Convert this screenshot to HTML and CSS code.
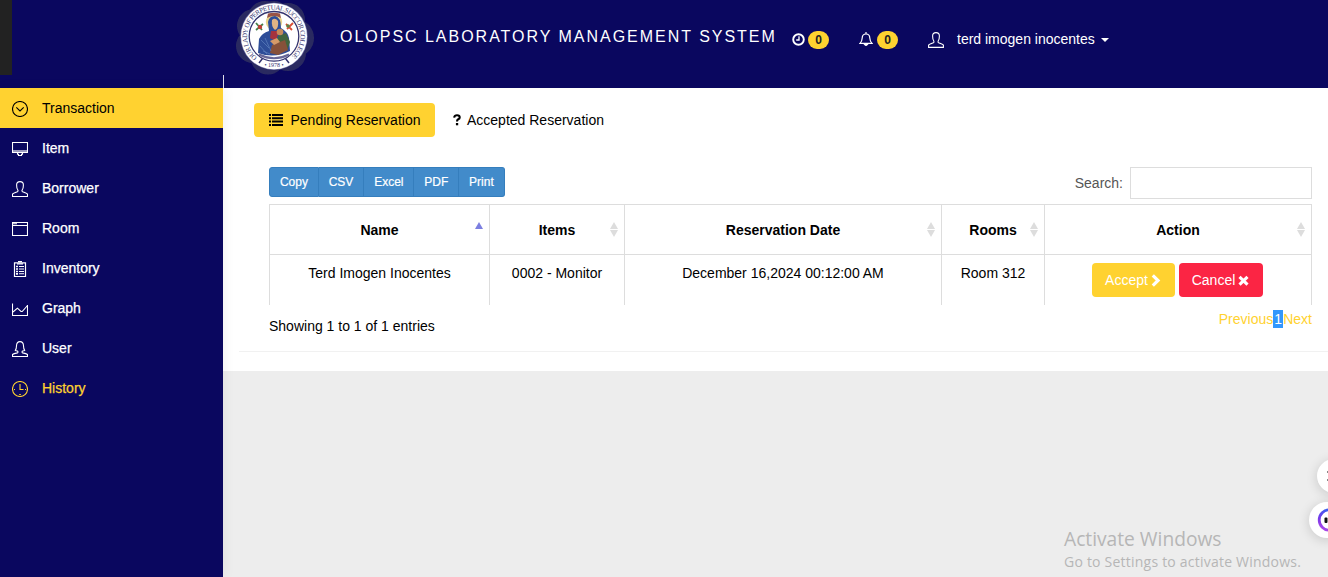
FILE: index.html
```
<!DOCTYPE html>
<html lang="en">
<head>
<meta charset="utf-8">
<title>OLOPSC Laboratory Management System</title>
<link rel="stylesheet" href="styles.css">
</head>
<body>
<header class="topbar">
  <div class="topbar-edge"></div>
  <svg class="logo" viewBox="0 0 82 76">
    <defs>
      <path id="ring-text" d="M23.3 57.3 A26.7 26.7 0 1 1 56.3 57.3"/>
      <filter id="soft"><feGaussianBlur stdDeviation="0.7"/></filter>
    </defs>
    <g fill="#2b2b60" filter="url(#soft)">
      <circle cx="31" cy="18" r="17"/><circle cx="54" cy="20" r="17"/><circle cx="20" cy="26" r="17"/><circle cx="61" cy="38" r="19"/>
      <circle cx="19" cy="46" r="17"/><circle cx="34" cy="57" r="17.5"/><circle cx="54" cy="53" r="18"/><circle cx="40" cy="17" r="16"/>
    </g>
    <circle cx="40" cy="36.3" r="33.6" fill="#7c7cae" filter="url(#soft)"/>
    <circle cx="40" cy="36.3" r="33" fill="#fff"/>
    <circle cx="40" cy="36.3" r="24.8" fill="#fff" stroke="#34346f" stroke-width="1.3"/>
    <text class="seal-text"><textPath href="#ring-text" textLength="130">OUR LADY OF PERPETUAL SUCCOR COLLEGE</textPath></text>
    <path d="M28.5 58.5 L25 63 M51.5 58.5 L55 63" stroke="#34346f" stroke-width="1.5"/>
    <path d="M25 54.5 Q40 62 55 54.5" fill="none" stroke="#676797" stroke-width="2"/>
    <text class="seal-year" x="40" y="67.3" text-anchor="middle">• 1978 •</text>
    <circle cx="40" cy="22" r="8.2" fill="#e9d48b"/>
    <path d="M33 18 L34 13.5 Q40 12 46 13.5 L47 18 Q40 14 33 18Z" fill="#9a5446"/>
    <path d="M34 22 Q35 16 41 16 Q47 17 47 28 Q54 32 55 38 L56 51 Q40 59 24 53 L25 39 Q28 33 35 31Z" fill="#2d4d98"/>
    <path d="M38 20 Q41 17 44 21 Q45 28 41 30 Q37 27 38 20Z" fill="#e0b385"/>
    <path d="M37 31 L45 31 L42 41 L36 38Z" fill="#a5323e"/>
    <path d="M44 36 L52 33 L56 42 L53 51 L43 46Z" fill="#40643d"/>
    <circle cx="46" cy="32" r="3.3" fill="#c58a5a"/>
    <path d="M38 45 L51 40 L54 50 L44 55 L36 53Z" fill="#86513a"/>
    <path d="M36 41 L43 38 L46 42 L40 45Z" fill="#d59a68"/>
    <path d="M27 40 L35 48 M26 46 L33 54 M31 38 L37 51 M29 51 L36 54" stroke="#6789c5" stroke-width=".6"/>
    <path d="M22 23 L28 30 M29 24 L22 30" stroke="#45804a" stroke-width="1.8"/><circle cx="26" cy="27" r="2.2" fill="#bf4035"/>
    <path d="M52 24 L58 30 M59 23 L53 29" stroke="#d94c36" stroke-width="1.8"/><circle cx="54" cy="26" r="1.8" fill="#5a8548"/>
  </svg>
  <h1 class="brand">OLOPSC LABORATORY MANAGEMENT SYSTEM</h1>
  <div class="notice">
    <svg class="icon-13 clock" viewBox="0 0 13 13" fill="none" stroke="#fff"><circle cx="6.5" cy="6.5" r="5.3" stroke-width="1.9"/><path d="M7 3.2V7H4.2" stroke-width="1.3"/></svg>
    <span class="badge">0</span>
  </div>
  <div class="notice bell">
    <svg class="icon-14" viewBox="0 0 14 14" fill="none" stroke="#fff" stroke-width="1.2"><path d="M7 0v1.6M1 11.4Q3 9.6 3.2 6Q3.3 2 7 2Q10.7 2 10.8 6Q11 9.6 13 11.4Z"/><path d="M5.3 12.2Q7 14.6 8.7 12.2Z" fill="#fff"/></svg>
    <span class="badge">0</span>
  </div>
  <div class="account">
    <svg class="icon-16" viewBox="0 0 16 16" fill="none" stroke="#fff" stroke-width="1.1"><path d="M.6 15.4V13.2Q1 12.2 5.4 10.8Q6.4 10.2 5.8 9Q4.6 7.5 4.6 4Q4.6.6 8 .6Q11.4.6 11.4 4Q11.4 7.5 10.2 9Q9.6 10.2 10.6 10.8Q15 12.2 15.4 13.2V15.4Z"/></svg>
    <span class="account-name">terd imogen inocentes</span>
    <span class="caret"></span>
  </div>
</header>

<div class="shell">
  <nav class="sidebar">
    <a class="nav-item active"><svg class="icon-16" viewBox="0 0 16 16"><circle cx="8" cy="8" r="7.5"/><path d="M4.3 6.4 8 10l3.7-3.6"/></svg>Transaction</a>
    <a class="nav-item"><svg class="icon-16" viewBox="0 0 16 16"><path d="M.5 1.5h15v10H.5Z"/><path d="M1 10h14" stroke-width="2" opacity=".6"/><path d="M5.5 12v1.2h1v1.3h3v-1.3h1V12"/></svg>Item</a>
    <a class="nav-item"><svg class="icon-16" viewBox="0 0 16 16"><path d="M.5 15.5V13.2Q1 12.2 5.4 10.8Q6.4 10.2 5.8 9Q4.6 7.5 4.6 4Q4.6.6 8 .6Q11.4.6 11.4 4Q11.4 7.5 10.2 9Q9.6 10.2 10.6 10.8Q15 12.2 15.5 13.2V15.5Z"/></svg>Borrower</a>
    <a class="nav-item"><svg class="icon-16" viewBox="0 0 16 16"><path d="M.5 1.5h15v13H.5ZM.5 4.5h15M1 2.8h4"/></svg>Room</a>
    <a class="nav-item"><svg class="icon-16" viewBox="0 0 16 16"><path d="M2.5 1.8h11v13.7h-11Z" stroke-width="1.2"/><path d="M5 2.8h6M6 .6h4" stroke-width="1.3"/><path d="M4 5.5h2M4 8h2M4 10.5h2M4 12.8h2" stroke-width="1.7"/><path d="M7 5.5h5M7 8h5M7 10.5h5M7 12.8h5"/></svg>Inventory</a>
    <a class="nav-item"><svg class="icon-16" viewBox="0 0 16 16"><path d="M.5 2.5v12h15V4"/><path d="M1 11l4.4-3.8L9 10.5h1.2L15.5 4.5"/></svg>Graph</a>
    <a class="nav-item"><svg class="icon-16" viewBox="0 0 16 16"><path d="M.5 15.5v-2q1-1 5-1.6q1-1-.2-1.9q-1.5-.2-2-.7q1.2-1.4 1.2-4.5Q4.6.6 8 .6q3.4 0 3.5 4.2q0 3.1 1.2 4.5q-.5.5-2 .7q-1.2.9-.2 1.9q4 .6 5 1.6v2Z"/></svg>User</a>
    <a class="nav-item history"><svg class="icon-16" viewBox="0 0 16 16"><circle cx="8" cy="8" r="7.5"/><path d="M8 3v5.5h3.5M2 8.5h1M13 8.5h1M7.2 13.5h1.6"/></svg>History</a>
  </nav>
  <main class="content">
    <section class="panel">
      <div class="tabs">
        <a class="tab tab-active"><svg class="list-icon" viewBox="0 0 14 12"><path d="M0 1h2M0 4.3h2M0 7.6h2M0 10.9h2M3 1h11M3 4.3h11M3 7.6h11M3 10.9h11" stroke="#000" stroke-width="2"/></svg>Pending Reservation</a>
        <a class="tab"><svg class="question-icon" viewBox="0 0 8 12"><path d="M1.1 3.6Q1.6 1.3 4 1.3Q6.7 1.3 6.7 3.4Q6.7 4.6 5.2 5.3Q4 5.9 4 7.6" fill="none" stroke="#000" stroke-width="2.1"/><path d="M2.9 9h2.3v2.3H2.9Z"/></svg>Accepted Reservation</a>
      </div>
      <div class="card">
        <div class="tools">
          <div class="exports"><button>Copy</button><button>CSV</button><button>Excel</button><button>PDF</button><button>Print</button></div>
          <label class="search">Search:<input type="text"></label>
        </div>
        <div class="table">
          <div class="row head">
            <div class="cell">Name<i class="sort up"></i></div>
            <div class="cell">Items<i class="sort"></i></div>
            <div class="cell">Reservation Date<i class="sort"></i></div>
            <div class="cell">Rooms<i class="sort"></i></div>
            <div class="cell">Action<i class="sort"></i></div>
          </div>
          <div class="row body">
            <div class="cell">Terd Imogen Inocentes</div>
            <div class="cell">0002 - Monitor</div>
            <div class="cell">December 16,2024 00:12:00 AM</div>
            <div class="cell">Room 312</div>
            <div class="cell actions">
              <button class="btn accept">Accept<svg width="10" height="13" viewBox="0 0 10 13"><path d="M1.8 1.4 7 6.5l-5.2 5.1" fill="none" stroke="#fff" stroke-width="3.2"/></svg></button>
              <button class="btn cancel">Cancel<svg width="11" height="11" viewBox="0 0 11 11"><path d="M1.5 1.8l8 7.8M9.5 1.8l-8 7.8" stroke="#fff" stroke-width="3.1"/></svg></button>
            </div>
          </div>
        </div>
        <div class="table-foot">
          <span class="info">Showing 1 to 1 of 1 entries</span>
          <span class="pager"><a>Previous</a><a class="current">1</a><a>Next</a></span>
        </div>
      </div>
    </section>
  </main>
</div>

<div class="watermark"><div class="wm-title">Activate Windows</div><div class="wm-sub">Go to Settings to activate Windows.</div></div>
<div class="bubble bubble-top"><svg width="34" height="34" viewBox="0 0 34 34"><path d="M10 13h8M10 21h8" stroke="#888" stroke-width="2"/></svg></div>
<div class="bubble bubble-bottom">
  <svg width="36" height="36" viewBox="0 0 36 36"><defs><linearGradient id="halo" x1="0" y1="1" x2=".35" y2="0"><stop offset="0" stop-color="#b44be8"/><stop offset=".5" stop-color="#7a38e8"/><stop offset="1" stop-color="#3d5cf0"/></linearGradient></defs><circle cx="20.5" cy="18" r="10.3" fill="#fff" stroke="url(#halo)" stroke-width="2.8"/><rect x="15.5" y="15.5" width="3" height="5.5" rx="1" fill="#111"/></svg>
</div>
</body>
</html>
```
FILE: styles.css
```
* { box-sizing: border-box; }
body { margin: 0; height: 577px; overflow: hidden; position: relative; background: #ededed; color: #000; font: 14px/20px "Liberation Sans", Arial, sans-serif; }
button, input { font-family: inherit; }
svg { flex: none; display: block; }

.topbar { height: 88px; background: #0a075f; display: flex; align-items: flex-start; color: #fff; }
.topbar-edge { width: 12px; height: 75px; background: #222; margin-right: 222px; }
.logo { width: 82px; height: 76px; }
.seal-text { font: 6.9px "Liberation Serif", serif; fill: #34346f; }
.seal-year { font: 6px "Liberation Serif", serif; fill: #34346f; }
.brand { margin: 27px 0 0 24px; width: 452px; white-space: nowrap; font-size: 16px; line-height: 20px; font-weight: 400; letter-spacing: 1.98px; }
.notice { display: flex; align-items: center; gap: 3px; margin-top: 31px; height: 18px; }
.clock { margin-bottom: 2px; }
.bell { margin-left: 30px; }
.bell .badge { margin-left: 1px; }
.badge { width: 21px; height: 18px; border-radius: 9px; background: #ffd230; color: #222; font-size: 12px; line-height: 18px; font-weight: 700; text-align: center; }
.icon-13 { width: 13px; height: 13px; }
.icon-14 { width: 14px; height: 14px; margin-bottom: 2px; }
.icon-16 { width: 16px; height: 16px; }
.account { display: flex; align-items: center; margin: 29px 0 0 30px; height: 20px; }
.account svg { margin-top: 2px; }
.account-name { margin-left: 13px; white-space: nowrap; }
.caret { margin: 2px 0 0 6px; border: 4px solid transparent; border-top-color: #fff; border-bottom: 0; }

.shell { display: flex; height: 489px; }
.sidebar { width: 223px; background: #0a075f; flex: none; box-shadow: 1px 0 12px rgba(0,0,0,.06); z-index: 1; }
.sidebar::before { content: ""; position: absolute; left: 223px; top: 75px; width: 1px; height: 13px; background: #dedeea; }
.nav-item { height: 40px; display: flex; align-items: center; padding-left: 12px; gap: 14px; color: #fff; -webkit-text-stroke: .25px currentColor; }
.nav-item svg { margin-top: 2px; fill: none; stroke: currentColor; stroke-width: 1.1; }
.nav-item.active { background: #ffd230; color: #000; -webkit-text-stroke: 0; }
.nav-item.history { color: #ffd230; }

.content { flex: 1; min-width: 0; }
.panel { height: 283px; background: #fff; padding: 15px 0 0 16px; }
.tabs { display: flex; padding-left: 15px; height: 34px; }
.tab { display: flex; align-items: center; padding: 0 15px; border-radius: 4px; white-space: nowrap; }
.tab-active { background: #ffd230; width: 181px; margin-right: 3px; }
.list-icon { width: 14px; height: 12px; margin-right: 7.5px; }
.question-icon { width: 8px; height: 12px; margin-right: 6px; }
.card { height: 215px; padding: 30px 16px 0 30px; border-bottom: 1px solid #f1f1f1; }
.tools { display: flex; justify-content: space-between; height: 37px; }
.exports { display: flex; height: 30px; }
.exports button { border: 1px solid #357ebd; border-left-width: 0; background: #428bca; color: #fff; padding: 0 9.9px; font-size: 12px; -webkit-text-stroke: .2px #fff; }
.exports button:first-child { border-left-width: 1px; border-radius: 3px 0 0 3px; }
.exports button:last-child { border-radius: 0 3px 3px 0; }
.search { display: flex; align-items: center; height: 32px; gap: 7px; color: #555; }
.search input { width: 182px; height: 32px; border: 1px solid #ddd; padding: 0; }
.row { display: grid; grid-template-columns: 220px 135px 317px 103px 268px; border-top: 1px solid #ddd; }
.cell { border-left: 1px solid #ddd; text-align: center; white-space: nowrap; }
.cell:last-child { border-right: 1px solid #ddd; }
.head { height: 50px; font-weight: 700; }
.head .cell { position: relative; padding-top: 15px; }
.body { height: 51px; }
.body .cell { padding-top: 8px; }
.sort::before, .sort::after { content: ""; position: absolute; right: 6px; top: 17px; border: 4px solid transparent; border-top: 0; border-bottom: 7px solid #ddd; }
.sort::after { top: 25px; border-top: 7px solid #ddd; border-bottom: 0; }
.sort.up::before { border-bottom-color: #7c7fe0; }
.sort.up::after { display: none; }
.body .actions { display: flex; justify-content: center; align-items: flex-start; gap: 4px; padding-right: 2px; }
.btn { height: 34px; border: 0; border-radius: 4px; color: #fff; font-size: 14px; display: flex; align-items: center; padding: 0; justify-content: center; }
.accept { width: 83px; gap: 3px; background: #ffd230; }
.cancel { width: 84px; gap: 3px; background: #fb2544; }
.table-foot { display: flex; justify-content: space-between; }
.info { padding-top: 11px; }
.pager { display: flex; height: 18px; margin-top: 5px; line-height: 18px; color: #ffd230; }
.current { background: #3297fd; color: #fff; width: 10px; text-align: center; }

.watermark { position: absolute; left: 1064px; top: 526px; color: #b6b6b6; white-space: nowrap; font-family: "Open Sans", "Noto Sans", sans-serif; }
.wm-title { font-size: 19.2px; line-height: 26px; }
.wm-sub { font-size: 14px; line-height: 20px; letter-spacing: .22px; }
.bubble { position: absolute; background: #fff; border-radius: 50%; box-shadow: 0 2px 12px rgba(0,0,0,.16); }
.bubble-top { left: 1317px; top: 459px; }
.bubble-bottom { left: 1309px; top: 502px; }
```
